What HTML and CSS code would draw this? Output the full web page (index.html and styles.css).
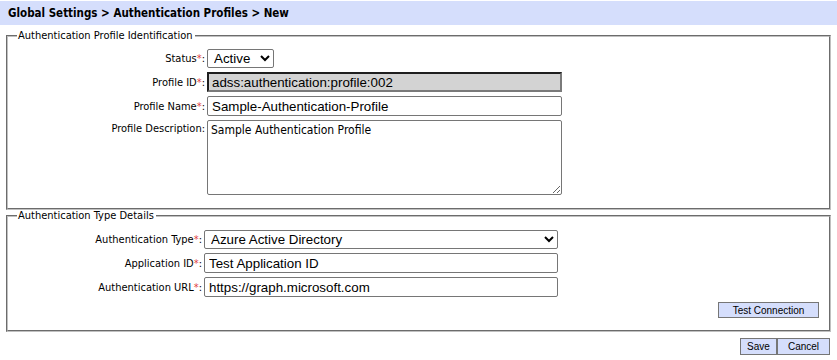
FILE: index.html
```html
<!DOCTYPE html>
<html lang="en">
  <head>
    <meta charset="UTF-8" />
    <meta name="viewport" content="width=device-width, initial-scale=1.0" />
    <title>New Authentication Profile</title>
    <link rel="stylesheet" href="styles.css">
  </head>
  <body>
    <div class="page-title">Global Settings &gt; Authentication Profiles &gt; New</div>

    <form id="profileForm" class="wrapper">
      <fieldset class="section">
        <legend>Authentication Profile Identification</legend>
        <div class="field-grid id-grid">
          <label for="status">Status<span class="req">*</span>:</label>
          <div>
            <select id="status" name="status" class="status-select">
              <option>Active</option>
              <option>Inactive</option>
            </select>
          </div>

          <label for="profileId">Profile ID<span class="req">*</span>:</label>
          <div>
            <input type="text" id="profileId" name="profileId" class="text-input readonly" value="adss:authentication:profile:002" readonly />
          </div>

          <label for="profileName">Profile Name<span class="req">*</span>:</label>
          <div>
            <input type="text" id="profileName" name="profileName" class="text-input" value="Sample-Authentication-Profile" />
          </div>

          <label for="profileDesc" class="top-label">Profile Description:</label>
          <div>
            <textarea id="profileDesc" name="profileDesc" class="desc-input">Sample Authentication Profile</textarea>
          </div>
        </div>
      </fieldset>

      <fieldset class="section type-section">
        <legend>Authentication Type Details</legend>
        <div class="field-grid type-grid">
          <label for="authType">Authentication Type<span class="req">*</span>:</label>
          <div>
            <select id="authType" name="authType" class="type-select">
              <option>Azure Active Directory</option>
              <option>LDAP</option>
            </select>
          </div>

          <label for="appId">Application ID<span class="req">*</span>:</label>
          <div>
            <input type="text" id="appId" name="appId" class="text-input" value="Test Application ID" />
          </div>

          <label for="authUrl">Authentication URL<span class="req">*</span>:</label>
          <div>
            <input type="text" id="authUrl" name="authUrl" class="text-input" value="https://graph.microsoft.com" />
          </div>
        </div>
        <div class="test-row">
          <button type="button" class="btn test-btn">Test Connection</button>
        </div>
      </fieldset>

      <div class="actions">
        <button type="submit" class="btn save-btn">Save</button>
        <button type="button" class="btn cancel-btn">Cancel</button>
      </div>
    </form>
  </body>
</html>
```

FILE: styles.css
```css
* {
  box-sizing: border-box;
}

body {
  margin: 0;
  font-family: "DejaVu Sans Condensed", "DejaVu Sans", sans-serif;
  font-size: 11px;
  color: #000;
  background: #fff;
}

.page-title {
  margin-top: 1px;
  height: 24px;
  line-height: 24px;
  padding-left: 8px;
  background: #d5defc;
  font-weight: bold;
  font-size: 11.5px;
}

.wrapper {
  padding: 0 4px;
}

.section {
  margin: 5px 2px 0;
  padding: 7px 10px 13px;
  border: 2px groove #c0c0c0;
  min-width: 0;
}

.type-section {
  margin-top: 0;
  padding-top: 8px;
  padding-bottom: 12px;
}

legend {
  padding: 0 2px 0 1px;
  margin-left: -1px;
  line-height: 12px;
}

.field-grid {
  display: grid;
  column-gap: 2px;
  row-gap: 4px;
  align-items: center;
}

.id-grid {
  grid-template-columns: 187px 355px;
}

.type-grid {
  grid-template-columns: 184px 354px;
}

.field-grid label {
  text-align: right;
  white-space: nowrap;
}

.field-grid .top-label {
  align-self: start;
  padding-top: 2px;
}

.req {
  color: #e0413f;
}

.text-input,
select {
  display: block;
  font-family: "Liberation Sans", Arial, sans-serif;
  font-size: 13.333px;
  color: #000;
}

.text-input {
  width: 100%;
  height: 20px;
  padding: 0 4px;
  border: 1px solid #767676;
  border-radius: 2px;
  background: #fff;
}

.text-input.readonly {
  padding: 0 3px;
  background: #d3d3d3;
  border-width: 2px;
  border-color: #1e1e1e #7a7a7a #7a7a7a #1e1e1e;
  border-radius: 0;
}

select {
  height: 19px;
  padding: 0 2px;
  border: 1px solid #767676;
  border-radius: 2px;
  background: #fff;
}

.status-select {
  width: 67px;
}

.type-select {
  width: 100%;
}

.desc-input {
  display: block;
  width: 100%;
  height: 75px;
  padding: 2px 3px;
  border: 1px solid #767676;
  border-radius: 2px;
  font-family: "DejaVu Sans Condensed", "DejaVu Sans", sans-serif;
  font-size: 12px;
  resize: both;
}

.btn {
  height: 17px;
  padding: 0;
  border: 1px solid #767676;
  background: #d5defc;
  font-family: "Liberation Sans", Arial, sans-serif;
  font-size: 10px;
  color: #000;
  cursor: pointer;
}

.test-row {
  display: flex;
  justify-content: flex-end;
  margin-top: 5px;
}

.test-btn {
  width: 101px;
  height: 16px;
}

.actions {
  display: flex;
  justify-content: flex-end;
  padding-right: 3px;
  margin-top: 6px;
}

.save-btn {
  width: 37px;
}

.cancel-btn {
  width: 53px;
}
```
